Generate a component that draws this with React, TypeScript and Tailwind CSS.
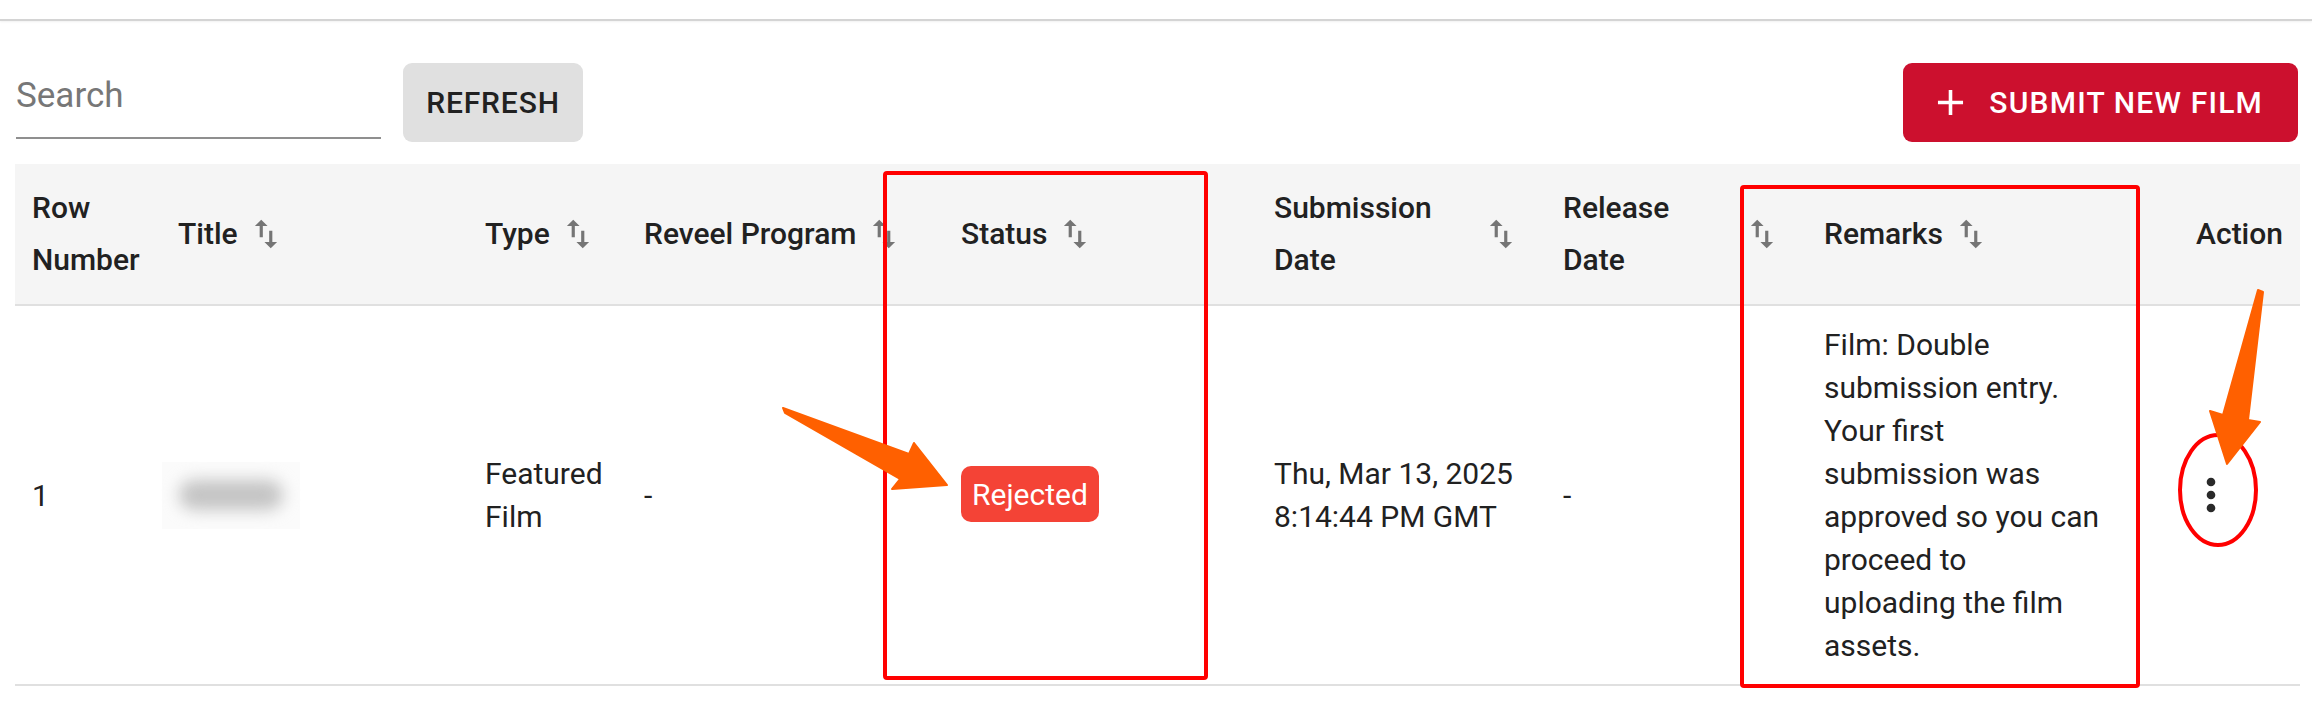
import React from 'react'

const COLS = 'grid grid-cols-[146px_307px_159px_317px_313px_289px_261px_314px_179px]'

function SortIcon() {
  return (
    <svg viewBox="0 0 24 24" className="ml-[9px] mr-[9px] h-[38px] w-[38px] shrink-0 fill-[#757575]">
      <path d="M16 17.01V10h-2v7.01h-3L15 21l4-3.99h-3zM9 3L5 6.99h3V14h2V6.99h3L9 3z" />
    </svg>
  )
}

type HeadProps = { label: string; sortable?: boolean; right?: boolean }

function HeadCell({ label, sortable = true, right = false }: HeadProps) {
  return (
    <div className={`flex items-center px-[17px] py-[18px] ${right ? 'justify-end' : ''}`}>
      <span className="min-w-0">{label}</span>
      {sortable && <SortIcon />}
    </div>
  )
}

function Cell({ children, center = false }: { children?: React.ReactNode; center?: boolean }) {
  return (
    <div className={`flex items-center px-[17px] py-[17px] ${center ? 'justify-center' : ''}`}>
      {children}
    </div>
  )
}

// red boxes, ellipse and orange arrows drawn over the screenshot
function Annotations() {
  return (
    <svg className="pointer-events-none absolute left-0 top-0" width={2312} height={701} viewBox="0 0 2312 701">
      <rect x={885} y={173} width={321} height={505} rx={2} fill="none" stroke="#ff0000" strokeWidth={4} />
      <rect x={1742} y={187} width={396} height={499} rx={2} fill="none" stroke="#ff0000" strokeWidth={4} />
      <ellipse cx={2218} cy={490} rx={38} ry={55} fill="none" stroke="#ff0000" strokeWidth={4} />
      <polygon
        points="783,408 909,454 914,443 947,485 892,489 900,479 785,413"
        fill="#ff6000"
        stroke="#ff6000"
        strokeWidth={2}
        strokeLinejoin="round"
      />
      <polygon
        points="2258,290 2263,292 2248,420 2260,422 2227,464 2210,411 2223,415"
        fill="#ff6000"
        stroke="#ff6000"
        strokeWidth={2}
        strokeLinejoin="round"
      />
    </svg>
  )
}

export default function App() {
  return (
    <div className="relative h-[701px] w-[2312px] overflow-hidden bg-white font-[Roboto,sans-serif] text-[#212121]">
      {/* top bar edge */}
      <div className="h-[21px] border-b-2 border-[#d4d4d4] shadow-[0_1px_2px_rgba(0,0,0,0.06)]" />

      <div className="pl-[15px]">
        {/* toolbar */}
        <div className="mt-[42px] flex h-[79px] w-[2283px] items-center">
          <div className="ml-[1px] mt-[4px] flex w-[365px] flex-col">
            <input
              placeholder="Search"
              className="h-[50px] w-full bg-transparent text-[35px] leading-[50px] outline-none placeholder:text-[#777]"
            />
            <div className="mt-[16px] h-[2px] bg-[#8f8f8f]" />
          </div>
          <button className="ml-[22px] flex h-[79px] w-[180px] items-center justify-center rounded-[9px] bg-[#e0e0e0] text-[30px] font-medium uppercase leading-[52px] tracking-[0.86px] text-[#212121]">
            Refresh
          </button>
          <button className="ml-auto flex h-[79px] items-center rounded-[9px] bg-[#cc102e] pl-[26px] pr-[35px] text-[30px] font-medium uppercase leading-[52px] tracking-[1.2px] text-white">
            <svg viewBox="0 0 24 24" className="mr-[17px] h-[43px] w-[43px] fill-white">
              <path d="M19 13h-6v6h-2v-6H5v-2h6V5h2v6h6v2z" />
            </svg>
            Submit New Film
          </button>
        </div>

        {/* table */}
        <div className="mt-[22px] w-[2285px]">
          <div className={`${COLS} border-b-2 border-[#e0e0e0] bg-[#f5f5f5] text-[30px] font-medium leading-[52px]`}>
            <HeadCell label="Row Number" sortable={false} />
            <HeadCell label="Title" />
            <HeadCell label="Type" />
            <HeadCell label="Reveel Program" />
            <HeadCell label="Status" />
            <HeadCell label="Submission Date" />
            <HeadCell label="Release Date" />
            <HeadCell label="Remarks" />
            <HeadCell label="Action" sortable={false} right />
          </div>

          <div className={`${COLS} border-b-2 border-[#e0e0e0] text-[30px] leading-[43px]`}>
            <Cell>1</Cell>
            <Cell>
              <div className="-ml-[16px] flex h-[67px] w-[138px] items-center justify-center bg-[#fbfbfb]">
                <div className="h-[30px] w-[104px] rounded-full bg-[#c4c4c4] blur-[8px]" />
              </div>
            </Cell>
            <Cell>Featured Film</Cell>
            <Cell>-</Cell>
            <Cell>
              <span className="-mt-[2px] flex h-[56px] items-center rounded-[10px] bg-[#f44336] px-[11px] text-white">
                Rejected
              </span>
            </Cell>
            <Cell>Thu, Mar 13, 2025 8:14:44 PM GMT</Cell>
            <Cell>-</Cell>
            <Cell>
              <p className="w-[280px]">
                Film: Double submission entry. Your first submission was approved so you can proceed to uploading the film assets.
              </p>
            </Cell>
            <Cell center>
              <svg viewBox="0 0 24 24" className="h-[52px] w-[52px] fill-[#2a2a2a]">
                <path d="M12 8c1.1 0 2-.9 2-2s-.9-2-2-2-2 .9-2 2 .9 2 2 2zm0 2c-1.1 0-2 .9-2 2s.9 2 2 2 2-.9 2-2-.9-2-2-2zm0 6c-1.1 0-2 .9-2 2s.9 2 2 2 2-.9 2-2-.9-2-2-2z" />
              </svg>
            </Cell>
          </div>
        </div>
      </div>

      <Annotations />
    </div>
  )
}
